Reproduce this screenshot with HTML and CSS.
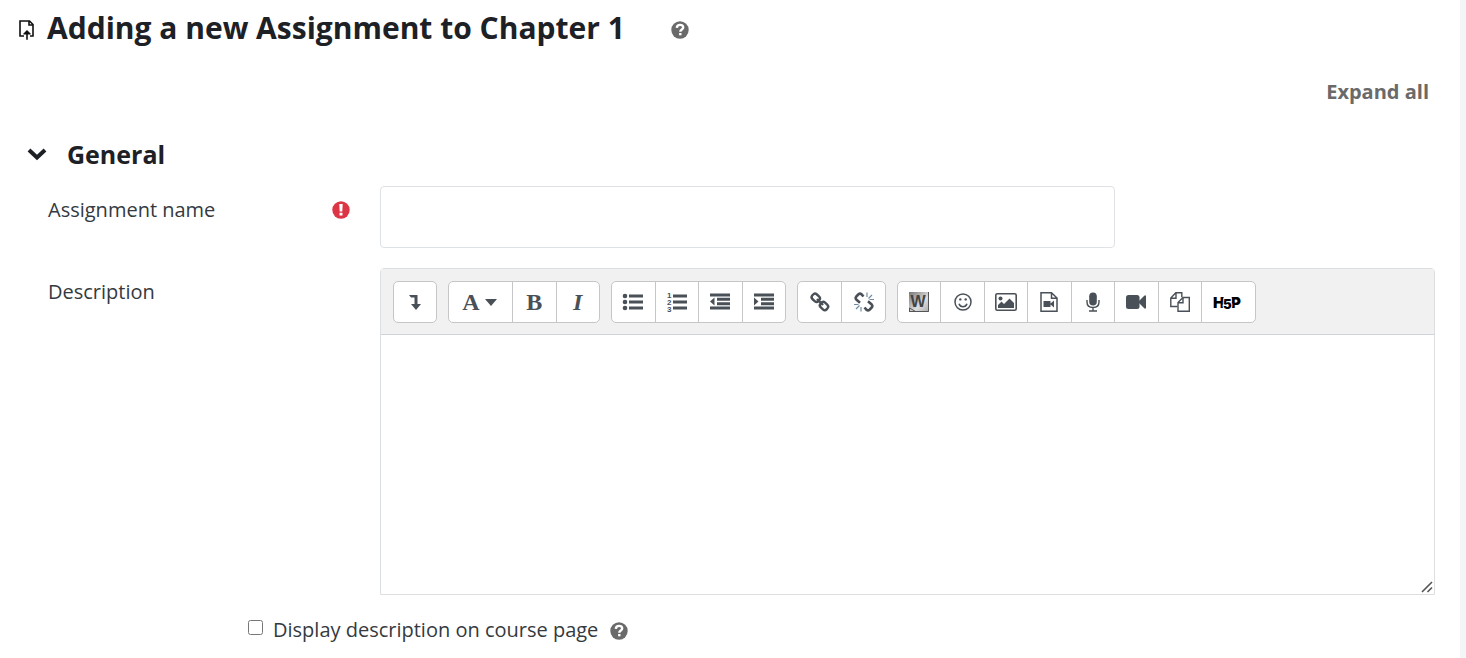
FILE: index.html
```html
<!DOCTYPE html>
<html lang="en">
<head>
    <meta charset="UTF-8">
    <meta name="viewport" content="width=device-width, initial-scale=1.0">
    <title>Adding a new Assignment</title>
    <link rel="stylesheet" href="styles.css">
</head>
<body>
    <main class="page">
        <header class="page-header">
            <svg class="icon-assign" width="16" height="20" viewBox="0 0 16 20" fill="none" stroke="#111" stroke-width="1.600">
                <path d="M5 16H1V1h9.500L14 4.500V16h-3M10 1v4h4M8 19.800V12"/>
                <path d="M8 10l3.500 3.500v1h-7v-1z" fill="#111" stroke="none"/>
            </svg>
            <h1>Adding a new Assignment to Chapter 1</h1>
            <button type="button" class="help" aria-label="Help with Assignment">
                <svg width="18" height="18" viewBox="0 0 18 18"><circle cx="9" cy="9" r="8.700" fill="#6a6a6a"/><path d="M5.800 6.800C6 4.600 7.300 3.900 9 3.900c1.900 0 3.200 1 3.200 2.600 0 2-2.900 2.100-2.900 4.200" fill="none" stroke="#fff" stroke-width="2.400"/><path d="M8.100 12h2.400v2.300H8.100z" fill="#fff"/></svg>
            </button>
        </header>

        <form>
            <div class="expand">
                <a href="#general">Expand all</a>
            </div>

            <div class="section-title" id="general">
                <button type="button" class="toggle" aria-label="Collapse General">
                    <svg width="20" height="14" viewBox="0 0 20 14" fill="none" stroke="#1d2125" stroke-width="4"><path d="M2 3l8 7.500L18 3"/></svg>
                </button>
                <h2>General</h2>
            </div>

            <div class="row">
                <div class="row-label">
                    <label for="name">Assignment name</label>
                    <svg width="18" height="18" viewBox="0 0 18 18"><circle cx="9" cy="9" r="8.700" fill="#dc3545"/><path d="M7.300 3h3.400l-.4 7.400H7.700zM7.500 11.700h3v2.800h-3z" fill="#fff"/></svg>
                </div>
                <div class="row-field">
                    <input type="text" id="name" class="text-input">
                </div>
            </div>

            <div class="row">
                <div class="row-label">
                    <label for="description">Description</label>
                </div>
                <div class="row-field">
                    <div class="editor">
                        <div class="toolbar">
                            <div class="group group-1">
                                <button type="button" aria-label="Show more buttons">
                                    <svg width="14" height="18" viewBox="0 0 14 18"><path d="M1 2h8.500v9H13l-5 6-5-6h3.500V4.500H3z" fill="#495057"/></svg>
                                </button>
                            </div>
                            <div class="group group-styles">
                                <button type="button" class="letter wide" aria-label="Paragraph styles">A
                                    <svg width="12" height="7" viewBox="0 0 12 7"><path d="M0 0h12L6 7z" fill="#495057"/></svg>
                                </button>
                                <button type="button" class="letter">B</button>
                                <button type="button" class="letter italic">I</button>
                            </div>
                            <div class="group group-4">
                                <button type="button" aria-label="Unordered list">
                                    <svg width="22" height="18" viewBox="0 0 22 18" fill="#495057"><circle cx="3" cy="3" r="2.300"/><circle cx="3" cy="9" r="2.300"/><circle cx="3" cy="15" r="2.300"/><path d="M7 1.500h14v3H7zM7 7.500h14v3H7zM7 13.500h14v3H7z"/></svg>
                                </button>
                                <button type="button" aria-label="Ordered list">
                                    <svg width="22" height="22" viewBox="0 0 22 22" fill="#495057"><path d="M7 3.500h14v3H7zM7 9.500h14v3H7zM7 15.500h14v3H7z"/><text x="1" y="7" class="digit">1</text><text x="1" y="14" class="digit">2</text><text x="1" y="21" class="digit">3</text></svg>
                                </button>
                                <button type="button" aria-label="Outdent">
                                    <svg width="22" height="18" viewBox="0 0 22 18" fill="#495057"><path d="M1 .5h20v3H1zM8 4.800h13v3H8zM8 9.200h13v3H8zM1 13.500h20v3H1zM1 8.500l4.500-4v8z"/></svg>
                                </button>
                                <button type="button" aria-label="Indent">
                                    <svg width="22" height="18" viewBox="0 0 22 18" fill="#495057"><path d="M1 .5h20v3H1zM8 4.800h13v3H8zM8 9.200h13v3H8zM1 13.500h20v3H1zM5.500 8.500L1 4.500v8z"/></svg>
                                </button>
                            </div>
                            <div class="group group-2">
                                <button type="button" aria-label="Link">
                                    <svg width="20" height="20" viewBox="0 0 20 20" fill="none" stroke="#495057" stroke-width="2.400"><rect x="-4.200" y="-3.200" width="8.400" height="6.400" rx="2.800" transform="translate(5.800 5.800) rotate(42)"/><rect x="-4.200" y="-3.200" width="8.400" height="6.400" rx="2.800" transform="translate(14 14) rotate(42)"/><path d="M7 7l6 6"/></svg>
                                </button>
                                <button type="button" aria-label="Unlink">
                                    <svg width="20" height="20" viewBox="0 0 20 20" fill="none" stroke="#495057" stroke-width="2.600"><path d="M9.500 4.500L7.500 2.300Q6 1 4.500 2.300L2.300 4.500Q1 6 2.300 7.500L6 10.700M10.500 15.500l2 2.200q1.500 1.300 3 0l2.200-2.200q1.300-1.500 0-3L14 9.300"/><path d="M13 5V.5M14.500 6.500L18 3M15.500 7.500H20M7 15v4.500M5.500 13.500L2 17M4.500 12.500H0" stroke="#6f8ba3" stroke-width="1.200"/></svg>
                                </button>
                            </div>
                            <div class="group group-media">
                                <button type="button" aria-label="Import Word file">
                                    <svg width="20" height="20" viewBox="0 0 20 20"><defs><linearGradient id="word" x1="0" y1="0" x2="1" y2="1"><stop offset="0" stop-color="#777"/><stop offset=".6" stop-color="#ddd"/><stop offset="1" stop-color="#aaa"/></linearGradient></defs><path d="M0 0h20v20H0z" fill="url(#word)"/><path d="M0 19.500h19.500V0M.5 20V16l6 3.500" fill="none" stroke="#555"/><text x="9" y="15" text-anchor="middle" class="word">W</text></svg>
                                </button>
                                <button type="button" aria-label="Emoji">
                                    <svg width="18" height="18" viewBox="0 0 18 18" fill="none" stroke="#495057" stroke-width="1.500"><circle cx="9" cy="9" r="8"/><path d="M5 10.700q1 3 4 3t4-3"/><circle cx="6.300" cy="6.400" r="1.200" fill="#495057" stroke="none"/><circle cx="11.700" cy="6.400" r="1.200" fill="#495057" stroke="none"/></svg>
                                </button>
                                <button type="button" aria-label="Image">
                                    <svg width="22" height="18" viewBox="0 0 22 18"><rect x=".8" y=".8" width="20.400" height="16.400" rx="1.500" fill="none" stroke="#495057" stroke-width="1.600"/><circle cx="5.500" cy="5.500" r="2" fill="#495057"/><path d="M3 15v-3l3.500-3.500L9 11l5.500-5.500L19 10v5z" fill="#495057"/></svg>
                                </button>
                                <button type="button" aria-label="Media file">
                                    <svg width="18" height="20" viewBox="0 0 18 20"><path d="M1 .8h10.500L17 6v13.200H1zM11.500 1v5.200H17" fill="none" stroke="#495057" stroke-width="1.500"/><path d="M3.500 9h7v2.500L14 8.500v7l-3.500-3V15h-7z" fill="#495057"/></svg>
                                </button>
                                <button type="button" aria-label="Record audio">
                                    <svg width="14" height="20" viewBox="0 0 14 20"><rect x="3.200" y=".5" width="7.600" height="13" rx="3.800" fill="#495057"/><path d="M1 8v2q0 5.500 6 5.500t6-5.500V8M7 15.500V19M3 19h8" fill="none" stroke="#495057" stroke-width="1.400"/></svg>
                                </button>
                                <button type="button" aria-label="Record video">
                                    <svg width="20" height="16" viewBox="0 0 20 16" fill="#495057"><rect x="0" y="1" width="13.500" height="14" rx="2.500"/><path d="M13 7l5.500-5.500H20v13h-1.500L13 9z"/></svg>
                                </button>
                                <button type="button" aria-label="Manage files">
                                    <svg width="20" height="20" viewBox="0 0 20 20" fill="none" stroke="#495057" stroke-width="1.400"><path d="M7.500 14.500H.8V6l5-5.200h6v4.500M6 1v5.200H1"/><path d="M13 5.500h6.300v13.700H8V10.500zM13 5.500v5.300H8"/></svg>
                                </button>
                                <button type="button" class="h5p" aria-label="Insert H5P">
                                    <svg width="34" height="24" viewBox="0 0 34 24"><path d="M10 11h8v3h-8z"/><text x="2" y="18" class="logo">H</text><text x="20" y="18" class="logo">P</text><text x="12" y="19" class="logo five">5</text></svg>
                                </button>
                            </div>
                        </div>
                        <textarea id="description"></textarea>
                        <svg class="grip" width="12" height="12" viewBox="0 0 12 12" stroke="#555" stroke-width="1.600"><path d="M1 11L11 1M6.500 11L11 6.500"/></svg>
                    </div>
                </div>
            </div>

            <div class="check-row">
                <input type="checkbox" id="show">
                <label for="show">Display description on course page</label>
                <button type="button" class="help" aria-label="Help with Display description on course page">
                    <svg width="18" height="18" viewBox="0 0 18 18"><circle cx="9" cy="9" r="8.700" fill="#6a6a6a"/><path d="M5.800 6.800C6 4.600 7.300 3.900 9 3.900c1.900 0 3.200 1 3.200 2.600 0 2-2.900 2.100-2.900 4.200" fill="none" stroke="#fff" stroke-width="2.400"/><path d="M8.100 12h2.400v2.300H8.100z" fill="#fff"/></svg>
                </button>
            </div>
        </form>
    </main>
</body>
</html>
```

FILE: styles.css
```css
* {
    box-sizing: border-box;
}
body {
    margin: 0;
    font-family: "Open Sans", sans-serif;
    font-size: 20px;
    line-height: 30px;
    color: #343a40;
    background-color: #f4f5f7;
}
.page {
    min-height: 100vh;
    margin-right: 6px;
    padding: 8px 25px 12px 19px;
    background-color: #fff;
}
button {
    display: flex;
    align-items: center;
    justify-content: center;
    padding: 0;
    border: none;
    background: none;
    cursor: pointer;
}
svg {
    display: block;
    flex: none;
}
h1, h2 {
    margin: 0;
    font-weight: 700;
    color: #1d2125;
}
h1 {
    margin: 0 46px 0 12px;
    font-size: 30px;
    line-height: 40px;
}
h2 {
    font-size: 25px;
    line-height: 32px;
}
.page-header {
    display: flex;
    align-items: center;
}
.page-header .help {
    margin-top: 4px;
}
.icon-assign {
    margin-top: 4px;
}
.expand {
    margin: 29px 6px 0 0;
    text-align: right;
}
.expand a {
    font-weight: 700;
    color: #6a6a6a;
    text-decoration: none;
}
.section-title {
    display: flex;
    align-items: center;
    gap: 20px;
    margin: 31px 0 16px 8px;
}
.row {
    display: flex;
    margin: 0 0 20px 29px;
}
.row-label {
    display: flex;
    flex: none;
    align-items: center;
    justify-content: space-between;
    align-self: flex-start;
    width: 302px;
    margin-right: 30px;
    padding-top: 9px;
}
.row-field {
    flex: 1;
}
.text-input {
    display: block;
    width: 100%;
    max-width: 735px;
    height: 62px;
    padding: 8px 16px;
    border: 1px solid #dee2e6;
    border-radius: 4px;
    font: inherit;
}
.editor {
    position: relative;
    border: 1px solid #dcdfe2;
    border-radius: 4px 4px 0 0;
}
.toolbar {
    display: flex;
    flex-wrap: wrap;
    gap: 11px;
    padding: 12px 12px 11px;
    border-bottom: 1px solid #ced4da;
    background-color: #f1f1f1;
}
.group {
    display: flex;
    height: 42px;
    border: 1px solid #c4c6c8;
    border-radius: 5px;
    background-color: #fff;
}
.group-1 {
    width: 44px;
}
.group-styles {
    width: 152px;
}
.group-4 {
    width: 175px;
}
.group-2 {
    width: 89px;
}
.group-media {
    width: 359px;
}
.group button {
    flex: 1;
}
.group button + button {
    border-left: 1px solid #c4c6c8;
}
.group .wide {
    flex: none;
    gap: 5px;
    width: 63px;
    padding-right: 2px;
}
.group .h5p {
    flex: none;
    width: 54px;
}
.letter {
    font: bold 24px "Liberation Serif", serif;
    color: #495057;
}
.italic {
    font-style: italic;
}
.digit {
    font: bold 8px "Liberation Sans", sans-serif;
}
.word {
    font: bold 16px "Liberation Sans", sans-serif;
    fill: #444;
}
.logo {
    font: 900 15px Inter, sans-serif;
}
.five {
    font-size: 13px;
    stroke: #fff;
    stroke-width: 2px;
    paint-order: stroke;
}
textarea {
    display: block;
    width: 100%;
    height: 259px;
    padding: 8px 16px;
    border: none;
    resize: none;
    font: inherit;
}
.grip {
    position: absolute;
    right: 1px;
    bottom: 1px;
}
.check-row {
    display: flex;
    align-items: center;
    margin-left: 229px;
}
.check-row input {
    width: 15px;
    height: 15px;
    margin: 0 10px 5px 0;
}
.check-row .help {
    margin: 2px 0 0 12px;
}
```
